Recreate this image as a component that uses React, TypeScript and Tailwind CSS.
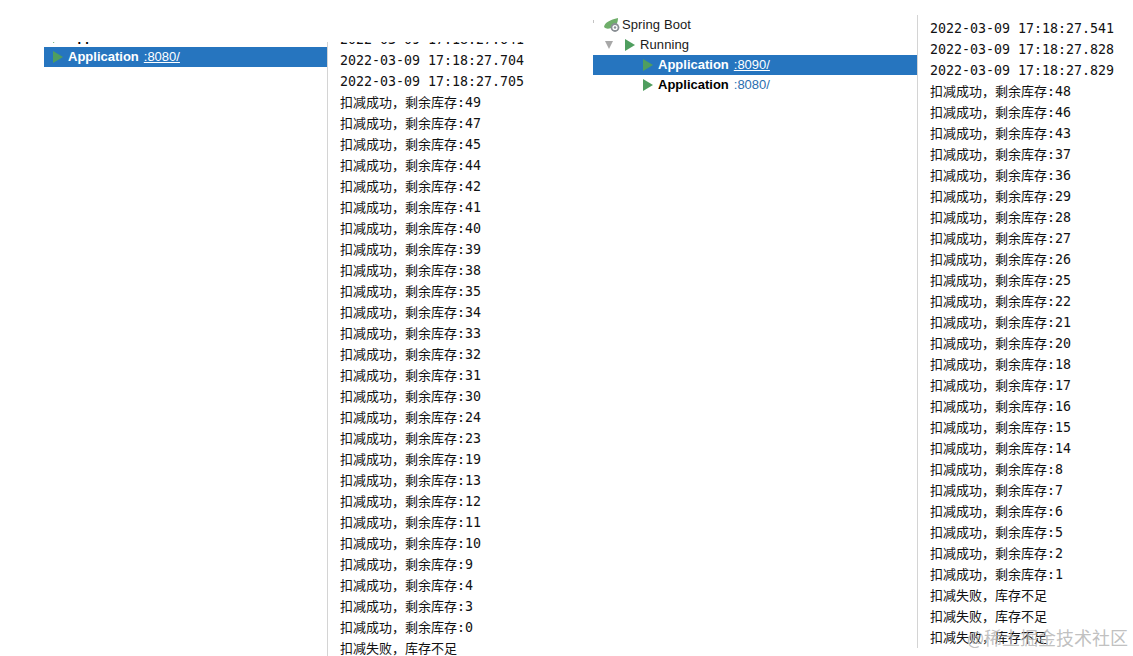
import React from 'react';

const mono = "font-['DejaVu_Sans_Mono','Noto_Sans_CJK_SC',monospace]";
const COMMA = '\uFF0C';

const leftStock = [49, 47, 45, 44, 42, 41, 40, 39, 38, 35, 34, 33, 32, 31, 30, 24, 23, 19, 13, 12, 11, 10, 9, 4, 3, 0];
const rightStock = [48, 46, 43, 37, 36, 29, 28, 27, 26, 25, 22, 21, 20, 18, 17, 16, 15, 14, 8, 7, 6, 5, 2, 1];

function Play({ className }: { className?: string }) {
  return (
    <svg viewBox="0 0 10 12" className={className}>
      <path d="M0 0 L10 6 L0 12 Z" fill="#4f9e5f" />
    </svg>
  );
}

function SpringIcon() {
  return (
    <svg viewBox="0 0 16 14" className="w-4 h-[14px] shrink-0">
      <path d="M0 9 C1 4 6 2 14 0 C14 5 12 9 7 10 C4 11 2 11 0 9 Z" fill="#6fae6a" />
      <circle cx="11" cy="9.5" r="4.4" fill="#8a8f94" />
      <circle cx="11" cy="9.5" r="2.6" fill="#ffffff" />
      <circle cx="11" cy="9.5" r="1.2" fill="#8a8f94" />
    </svg>
  );
}

function AppRow({ port, selected, indent, className = '' }: { port: string; selected?: boolean; indent: string; className?: string }) {
  return (
    <div className={`h-5 flex items-center ${indent} ${selected ? 'bg-[#2675bf]' : ''} ${className}`}>
      <Play className="w-[10px] h-3 shrink-0" />
      <span className={`ml-[5px] text-[13px] font-bold ${selected ? 'text-white' : 'text-black'}`}>Application</span>
      <span className={`ml-[5px] text-[13px] ${selected ? 'text-white underline' : 'text-[#2a6eaf]'}`}>{port}</span>
    </div>
  );
}

function LogLine({ children }: { children: React.ReactNode }) {
  return <div className="h-[21px] leading-[21px] whitespace-nowrap">{children}</div>;
}

function Log({ times, stock, fails, className }: { times: string[]; stock: number[]; fails: number; className: string }) {
  return (
    <div className={`border-l border-[#d4d4d4] pl-3 overflow-hidden text-[13px] text-[#111111] ${mono} ${className}`}>
      {times.map((t) => (
        <LogLine key={t}>
          <span className="text-[13.3px]">{t}</span>
        </LogLine>
      ))}
      {stock.map((n) => (
        <LogLine key={n}>
          扣减成功{COMMA}剩余库存<span className="text-[13.3px]">:{n}</span>
        </LogLine>
      ))}
      {Array.from({ length: fails }).map((_, i) => (
        <LogLine key={i}>扣减失败{COMMA}库存不足</LogLine>
      ))}
    </div>
  );
}

export default function App() {
  return (
    <div className="relative flex h-[656px] overflow-hidden bg-white font-['Liberation_Sans','Noto_Sans',sans-serif]">
      {/* Left window */}
      <div className="w-[283px] ml-[44px] mt-[42px] h-[25px] overflow-hidden shrink-0">
        <AppRow port=":8080/" indent="pl-[9px]" className="-mt-[15px]" />
        <AppRow port=":8080/" selected indent="pl-[9px]" />
      </div>
      <Log
        className="w-[266px] shrink-0 mt-[42px] h-[614px] [&>div:first-child]:-mt-[13px]"
        times={['2022-03-09 17:18:27.641', '2022-03-09 17:18:27.704', '2022-03-09 17:18:27.705']}
        stock={leftStock}
        fails={1}
      />

      {/* Right window */}
      <div className="w-[324px] pt-[15px] shrink-0">
        <div className="h-5 flex items-center text-[13px] text-[#1a1a1a]">
          <span className="w-px h-[3px] bg-[#c4c4c4] self-start mt-[5px] shrink-0" />
          <span className="ml-[10px] flex items-center">
            <SpringIcon />
            <span className="ml-[2px] tracking-[0.1px]">Spring Boot</span>
          </span>
        </div>
        <div className="h-5 flex items-center pl-[12px] text-[13px] text-[#1a1a1a]">
          <svg viewBox="0 0 8 8" className="w-2 h-2 shrink-0">
            <path d="M0 0 H8 L4 8 Z" fill="#a8a8a8" />
          </svg>
          <Play className="ml-[12px] w-[10px] h-3 shrink-0" />
          <span className="ml-[5px] tracking-[0.1px]">Running</span>
        </div>
        <AppRow port=":8090/" selected indent="pl-[50px]" />
        <AppRow port=":8080/" indent="pl-[50px]" />
      </div>
      <Log
        className="flex-1 mt-[15px] h-[633px] pt-[3px]"
        times={['2022-03-09 17:18:27.541', '2022-03-09 17:18:27.828', '2022-03-09 17:18:27.829']}
        stock={rightStock}
        fails={3}
      />

      {/* Watermark */}
      <div className="absolute right-[5px] bottom-[5px] text-[18px] text-[#b0b0b0]/80 whitespace-nowrap font-['Noto_Sans_CJK_SC',sans-serif]">
        @稀土掘金技术社区
      </div>
    </div>
  );
}
